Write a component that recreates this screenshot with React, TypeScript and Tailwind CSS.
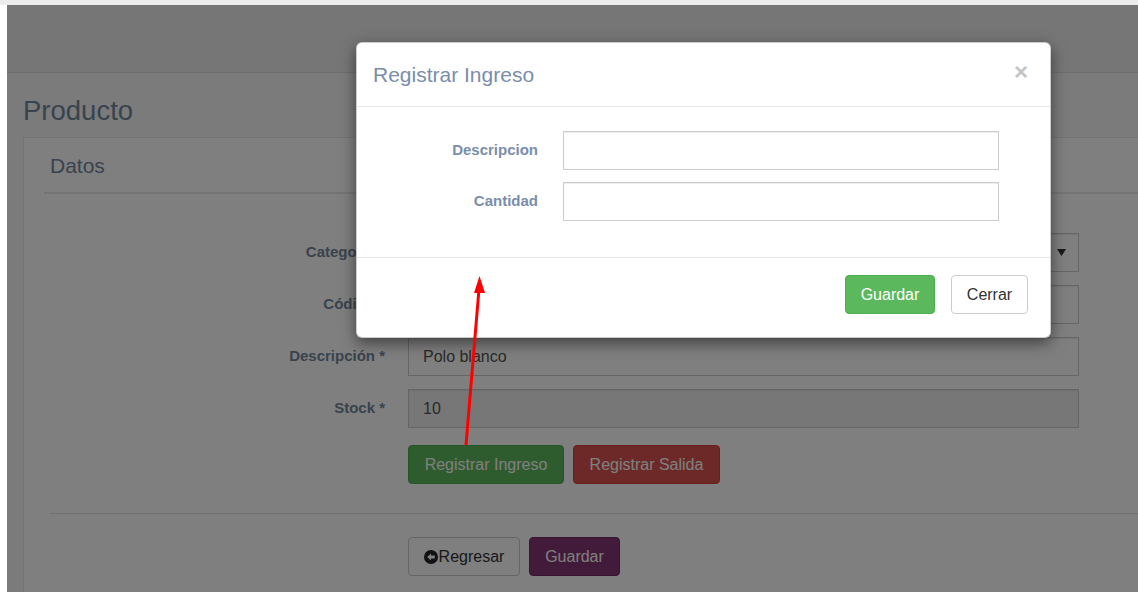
import type { ReactNode } from 'react';

// Producto edit screen with the "Registrar Ingreso" dialog open on top

function TextBox({ value, disabled, select }: { value?: string; disabled?: boolean; select?: boolean }) {
    return (
        <div
            className={
                'flex h-[39px] w-full items-center justify-between border border-[#ccc] px-[14px] text-[16px] text-[#555] shadow-[inset_0_1px_1px_rgba(0,0,0,0.075)] ' +
                (disabled ? 'bg-[#eee]' : 'bg-white')
            }
        >
            <span>{value}</span>
            {select && (
                <svg width="9" height="7" viewBox="0 0 9 7" className="mr-[-2px]">
                    <polygon points="0,0 9,0 4.5,7" fill="#333" />
                </svg>
            )}
        </div>
    );
}

function FieldRow({ label, children }: { label: string; children: ReactNode }) {
    return (
        <div className="flex h-[39px] items-center">
            <label className="w-[341px] text-right text-[15px] font-bold text-[#73879c]">{label}</label>
            <div className="ml-[23px] w-[671px]">{children}</div>
        </div>
    );
}

function ModalRow({ label }: { label: string }) {
    return (
        <div className="flex h-[39px] items-center">
            <label className="w-[181px] text-right text-[15px] font-bold text-[#7a8eab]">{label}</label>
            <div className="ml-[25px] h-[39px] w-[436px] border border-[#ccc] bg-white shadow-[inset_0_1px_1px_rgba(0,0,0,0.075)]" />
        </div>
    );
}

function BackIcon() {
    return (
        <svg width="14" height="14" viewBox="0 0 14 14" className="mr-[1px]">
            <circle cx="7" cy="7" r="7" fill="#222" />
            <path d="M3.2 7 L7 3.4 L7 5.6 L10.8 5.6 L10.8 8.4 L7 8.4 L7 10.6 Z" fill="#fff" />
        </svg>
    );
}

export default function App() {
    return (
        <div className="h-[592px] w-[1138px] overflow-hidden bg-white font-['Liberation_Sans',Arial,sans-serif]">
            <div className="h-[5px] bg-[#ececec]" />
            <div className="relative ml-[7px] h-[587px] overflow-hidden bg-[#f7f7f7]">
                {/* top navigation bar */}
                <div className="h-[68px] border-b border-[#d9dee4] bg-[#ededed]" />

                <div className="px-[16px]">
                    <h3 className="mt-[23px] mb-[11px] text-[27.5px] leading-[30px] text-[#73879c]">Producto</h3>

                    <div className="w-[1140px] border border-[#e6e9ed] bg-white px-[20px] pt-[13px] pb-[40px]">
                        <div className="border-b-2 border-[#e6e9ed] px-[6px] pb-[11px] text-[21px] leading-[30px] text-[#73879c]">
                            Datos
                        </div>

                        <div className="mt-[39px] flex flex-col gap-[13px]">
                            <FieldRow label="Categoría *">
                                <TextBox select />
                            </FieldRow>
                            <FieldRow label="Código *">
                                <TextBox />
                            </FieldRow>
                            <FieldRow label="Descripción *">
                                <TextBox value="Polo blanco" />
                            </FieldRow>
                            <FieldRow label="Stock *">
                                <TextBox value="10" disabled />
                            </FieldRow>
                        </div>

                        <div className="mt-[17px] flex gap-[9px] pl-[364px]">
                            <button className="h-[39px] w-[156px] rounded-[4px] border border-[#4cae4c] bg-[#5cb85c] text-[16px] text-white">
                                Registrar Ingreso
                            </button>
                            <button className="h-[39px] w-[147px] rounded-[4px] border border-[#d43f3a] bg-[#d9534f] text-[16px] text-white">
                                Registrar Salida
                            </button>
                        </div>

                        <div className="mt-[29px] ml-[6px] h-px bg-[#e5e5e5]" />

                        <div className="mt-[23px] flex gap-[9px] pl-[364px]">
                            <button className="flex h-[39px] w-[112px] items-center justify-center rounded-[4px] border border-[#ccc] bg-white text-[16px] text-[#333]">
                                <BackIcon />
                                Regresar
                            </button>
                            <button className="h-[39px] w-[91px] rounded-[4px] border border-[#6f2a63] bg-[#843474] text-[16px] text-white">
                                Guardar
                            </button>
                        </div>
                    </div>
                </div>

                {/* backdrop */}
                <div className="absolute inset-0 bg-black/50" />

                {/* dialog */}
                <div className="absolute top-[37px] left-[349px] w-[695px] rounded-[6px] border border-black/20 bg-white shadow-[0_5px_15px_rgba(0,0,0,0.5)]">
                    <div className="flex h-[64px] items-center justify-between border-b border-[#e5e5e5] pr-[22px] pl-[16px]">
                        <span className="text-[21px] text-[#7a8eab]">Registrar Ingreso</span>
                        <span className="mt-[-6px] text-[24px] leading-none font-bold text-[#c4c4c4]">×</span>
                    </div>
                    <div className="flex flex-col gap-[12px] pt-[24px] pb-[36px]">
                        <ModalRow label="Descripcion" />
                        <ModalRow label="Cantidad" />
                    </div>
                    <div className="flex justify-end gap-[16px] border-t border-[#e5e5e5] pt-[17px] pr-[22px] pb-[23px]">
                        <button className="h-[39px] w-[90px] rounded-[4px] border border-[#4cae4c] bg-[#5cb85c] text-[16px] text-white">
                            Guardar
                        </button>
                        <button className="h-[39px] w-[77px] rounded-[4px] border border-[#ccc] bg-white text-[16px] text-[#333]">
                            Cerrar
                        </button>
                    </div>
                </div>

                {/* red pointer arrow */}
                <svg className="pointer-events-none absolute inset-0" width="1131" height="587">
                    <line x1="459" y1="440" x2="472" y2="284" stroke="#ff0000" strokeWidth="3" />
                    <polygon points="472.5,271 467,288 478,288" fill="#ff0000" />
                </svg>
            </div>
        </div>
    );
}
